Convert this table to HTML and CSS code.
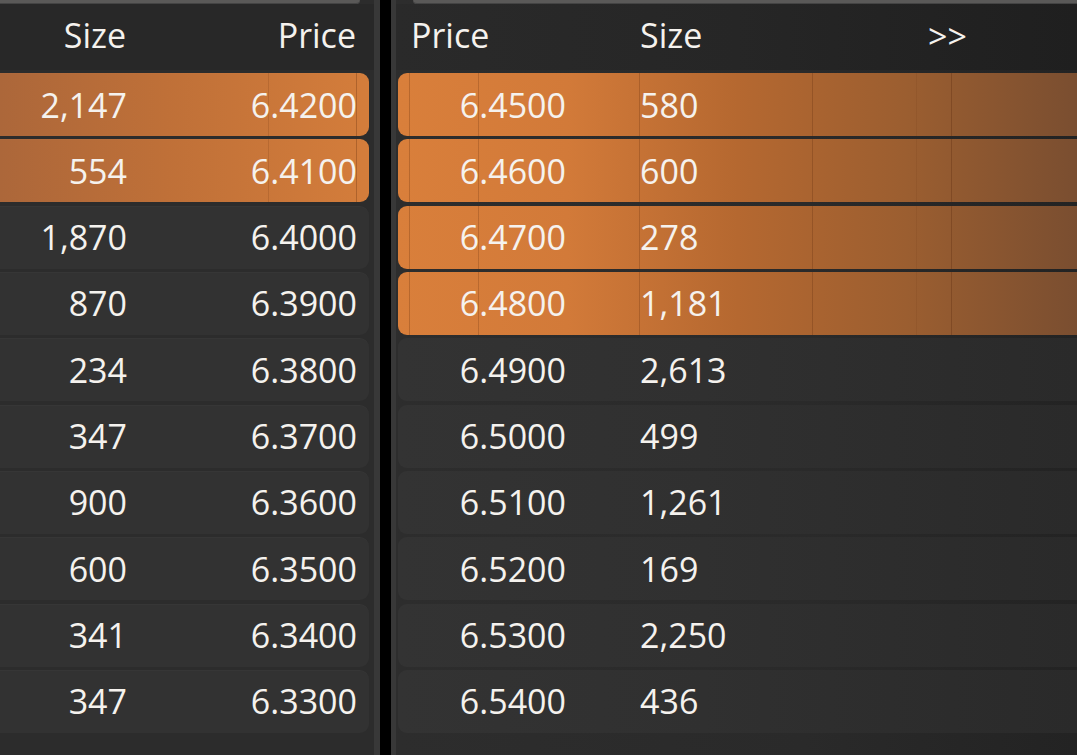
FILE: index.html
```html
<!DOCTYPE html>
<html>
<head>
<meta charset="utf-8">
<link rel="stylesheet" href="styles.css">
</head>
<body>
<div class="book">
  <section class="pane pane-bid">
    <div class="tab"></div>
    <div class="head bid-grid">
      <span class="c-size">Size</span>
      <span class="c-price">Price</span>
    </div>
    <div class="rows">
      <div class="row bid-grid hot"><span class="c-size">2,147</span><span class="c-price">6.4200</span></div>
      <div class="row bid-grid hot"><span class="c-size">554</span><span class="c-price">6.4100</span></div>
      <div class="row bid-grid"><span class="c-size">1,870</span><span class="c-price">6.4000</span></div>
      <div class="row bid-grid"><span class="c-size">870</span><span class="c-price">6.3900</span></div>
      <div class="row bid-grid"><span class="c-size">234</span><span class="c-price">6.3800</span></div>
      <div class="row bid-grid"><span class="c-size">347</span><span class="c-price">6.3700</span></div>
      <div class="row bid-grid"><span class="c-size">900</span><span class="c-price">6.3600</span></div>
      <div class="row bid-grid"><span class="c-size">600</span><span class="c-price">6.3500</span></div>
      <div class="row bid-grid"><span class="c-size">341</span><span class="c-price">6.3400</span></div>
      <div class="row bid-grid"><span class="c-size">347</span><span class="c-price">6.3300</span></div>
    </div>
  </section>
  <div class="divider"></div>
  <section class="pane pane-ask">
    <div class="tab"></div>
    <div class="head ask-head">
      <span>Price</span>
      <span>Size</span>
      <span class="more">&gt;&gt;</span>
    </div>
    <div class="rows">
      <div class="row ask-grid hot"><span class="c-price">6.4500</span><span class="c-size">580</span></div>
      <div class="row ask-grid hot"><span class="c-price">6.4600</span><span class="c-size">600</span></div>
      <div class="row ask-grid hot"><span class="c-price">6.4700</span><span class="c-size">278</span></div>
      <div class="row ask-grid hot"><span class="c-price">6.4800</span><span class="c-size">1,181</span></div>
      <div class="row ask-grid"><span class="c-price">6.4900</span><span class="c-size">2,613</span></div>
      <div class="row ask-grid"><span class="c-price">6.5000</span><span class="c-size">499</span></div>
      <div class="row ask-grid"><span class="c-price">6.5100</span><span class="c-size">1,261</span></div>
      <div class="row ask-grid"><span class="c-price">6.5200</span><span class="c-size">169</span></div>
      <div class="row ask-grid"><span class="c-price">6.5300</span><span class="c-size">2,250</span></div>
      <div class="row ask-grid"><span class="c-price">6.5400</span><span class="c-size">436</span></div>
    </div>
  </section>
</div>
</body>
</html>
```

FILE: styles.css
```css
html, body {
  margin: 0;
  padding: 0;
  background: #2a2a2a;
}
body {
  width: 1077px;
  height: 755px;
  overflow: hidden;
  font-family: "Open Sans", "Noto Sans", sans-serif;
  font-size: 34px;
  color: #f5f2ee;
}
.book {
  display: flex;
  height: 755px;
}
.pane {
  display: flex;
  flex-direction: column;
  background: #2c2c2c;
}
.pane-bid {
  width: 374px;
  border-right: 6px solid #383838;
}
.divider {
  width: 11px;
  background: #000;
}
.pane-ask {
  flex: 1;
  border-left: 5px solid #383838;
  background: linear-gradient(90deg, #2d2d2d 0%, #2a2a2a 60%, #232323 100%);
  min-width: 0;
}
.tab {
  height: 4px;
  background: #5a5958;
  box-shadow: inset 0 -1px 0 #444;
}
.pane-bid .tab {
  width: 360px;
  border-radius: 0 0 7px 0;
}
.pane-ask .tab {
  margin-left: 17px;
  border-radius: 0 0 0 7px;
}
.head {
  height: 66px;
  align-items: center;
  line-height: 1;
  padding-bottom: 4px;
  box-sizing: border-box;
}
.pane-bid .head {
  background: #282828;
}
.ask-head {
  display: grid;
  grid-template-columns: 229px 288px auto;
  padding-left: 15px;
  background: linear-gradient(90deg, #2a2a2a 0%, #262626 50%, #1f1f1f 100%);
}
.ask-head .more {
  padding-top: 2px;
}
.rows {
  display: flex;
  flex-direction: column;
  gap: 3.33px;
  padding-top: 3px;
}
.row {
  height: 63px;
  align-items: center;
  line-height: 1;
}
.bid-grid {
  display: grid;
  grid-template-columns: 127px 230px;
  text-align: right;
}
.pane-bid .row {
  width: 369px;
  border-radius: 0 9px 9px 0;
  background: #323232;
  box-shadow: inset 0 1px 0 rgba(255,255,255,0.02);
}
.pane-bid .head .c-size { padding-right: 1px; }
.pane-bid .head .c-price { padding-right: 1px; }
.pane-bid .row.hot {
  background:
    linear-gradient(90deg, transparent 268px, rgba(120,60,20,0.22) 268px 269px, transparent 269px 356px, rgba(120,60,20,0.4) 356px 357px, transparent 357px),
    linear-gradient(90deg, #ac673a 0%, #bf7038 45%, #d47d3b 100%);
}
.ask-grid {
  display: grid;
  grid-template-columns: 168px 74px auto;
}
.ask-grid .c-price {
  text-align: right;
}
.ask-grid .c-size {
  grid-column: 3;
}
.pane-ask .row {
  margin-left: 2px;
  border-radius: 9px 0 0 9px;
  background: linear-gradient(90deg, #333333 0%, #303030 45%, #2a2a2a 100%);
}
.pane-ask .row.hot {
  background:
    linear-gradient(90deg, transparent 11px, rgba(120,60,20,0.35) 11px 12px, transparent 12px 80px, rgba(120,60,20,0.3) 80px 81px, transparent 81px 241px, rgba(120,60,20,0.35) 241px 242px, transparent 242px 414px, rgba(110,55,20,0.35) 414px 415px, transparent 415px 518px, rgba(110,55,20,0.15) 518px 519px, transparent 519px 553px, rgba(100,50,20,0.4) 553px 554px, transparent 554px),
    linear-gradient(90deg, #d97f3b 0%, #d27a39 25%, #b56830 50%, #9b5e30 75%, #7a4e30 100%);
}
```
